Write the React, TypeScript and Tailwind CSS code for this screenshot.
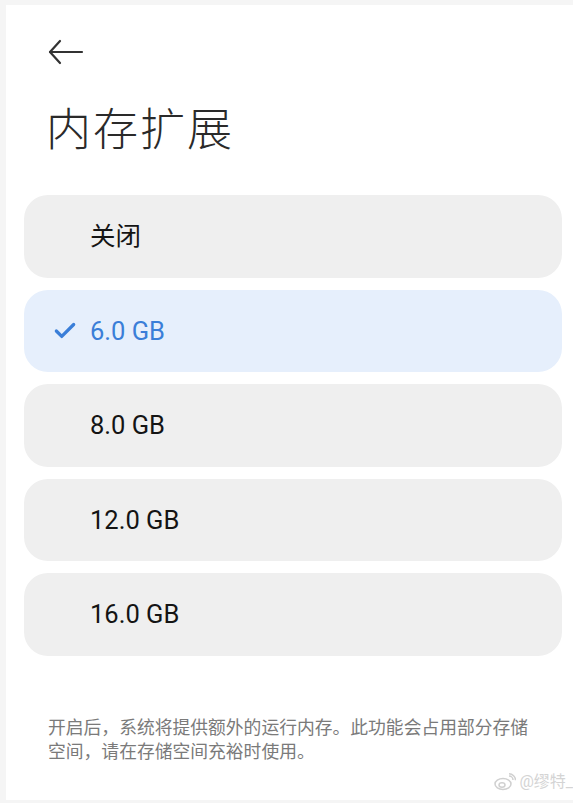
import { Check } from "lucide-react";

const OPTIONS = [
  { label: "关闭", selected: false },
  { label: "6.0 GB", selected: true },
  { label: "8.0 GB", selected: false },
  { label: "12.0 GB", selected: false },
  { label: "16.0 GB", selected: false },
];

const FONT = { fontFamily: 'Roboto, "Noto Sans CJK SC", sans-serif' };

export default function App() {
  return (
    <div className="w-[573px] h-[803px] bg-[#f5f5f5] pl-[6px] pt-[5px] pb-[3px] overflow-hidden" style={FONT}>
      <div className="relative h-full bg-white">
        {/* header */}
        <div className="pt-[34px] pl-[42px]">
          <svg width="36" height="26" viewBox="0 0 36 26" fill="none" stroke="#333" strokeWidth="2.2" strokeLinecap="round" strokeLinejoin="round">
            <path d="M34 13H2" />
            <path d="M12 2L2 13L12 24" />
          </svg>
        </div>
        <h1 className="ml-[40px] mt-[38px] text-[45px] leading-[56px] font-light text-[#2a2a2a] tracking-[2px]">内存扩展</h1>

        <div className="mt-[36px] ml-[18px] mr-[11px] flex flex-col gap-[12px]">
          {OPTIONS.map(o => (
            <div
              key={o.label}
              className={`h-[82.5px] rounded-[24px] flex items-center ${o.selected ? "bg-[#e6effc]" : "bg-[#efefef]"}`}
            >
              <div className="w-[66px] flex justify-end pr-[12px]">
                {o.selected && <Check size={26} strokeWidth={3} color="#3a7ed8" />}
              </div>
              <span className={`text-[25.5px] font-normal ${o.selected ? "text-[#3a7ed8]" : "text-[#141414]"}`}>{o.label}</span>
            </div>
          ))}
        </div>

        <p className="ml-[42px] w-[490px] mt-[60px] text-[17.8px] leading-[24px] text-[#7a7a7a]">
          开启后，系统将提供额外的运行内存。此功能会占用部分存储空间，请在存储空间充裕时使用。
        </p>

        <div className="absolute right-0 bottom-[6px] flex items-center gap-[3px] text-[#d4d4d4] text-[16px]">
          <svg width="22" height="18" viewBox="0 0 22 18" fill="none" stroke="#d0d0d0" strokeWidth="1.5">
            <ellipse cx="9" cy="11" rx="8" ry="5.5" />
            <ellipse cx="8" cy="12" rx="3" ry="2.2" />
            <path d="M15 3a4 4 0 0 1 4 4" />
            <path d="M15 0.8a6.5 6.5 0 0 1 6.5 6.5" />
          </svg>
          <span>@缪特_</span>
        </div>
      </div>
    </div>
  );
}
